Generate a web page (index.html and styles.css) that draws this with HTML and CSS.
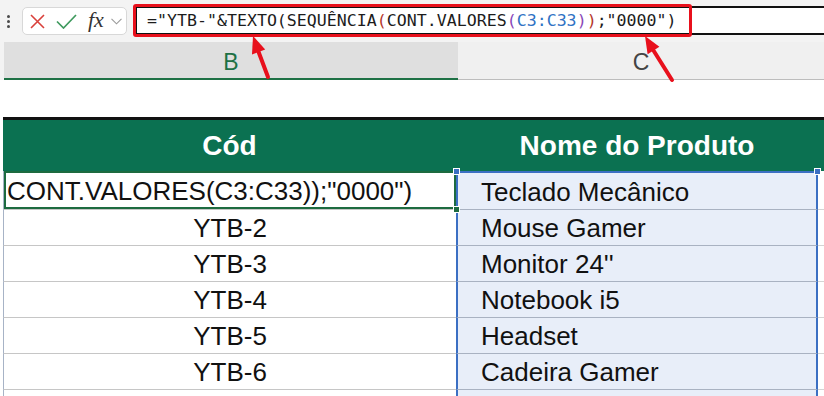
FILE: index.html
```html
<!DOCTYPE html>
<html lang="pt">
<head>
    <meta charset="UTF-8">
    <title>Planilha - Códigos</title>
    <link rel="stylesheet" href="styles.css">
</head>
<body>
    <div class="toolbar">
        <div class="grip"><i></i><i></i><i></i></div>
        <div class="fx-box">
            <svg class="ico-x" width="15" height="15" viewBox="0 0 15 15"><path d="M1 1L14 14M14 1L1 14" stroke="#d9403b" stroke-width="1.6" fill="none"/></svg>
            <svg class="ico-ok" width="21" height="15" viewBox="0 0 21 15"><path d="M1 7.5L7.5 14L20 1" stroke="#3f9a5e" stroke-width="1.7" fill="none"/></svg>
            <span class="fx">fx</span>
            <svg class="ico-down" width="11" height="7" viewBox="0 0 11 7"><path d="M0.5 0.8L5.5 5.8L10.5 0.8" stroke="#9a9a9a" stroke-width="1.1" fill="none"/></svg>
        </div>
        <div class="formula">="YTB-"&amp;TEXTO(SEQUÊNCIA<span class="p1">(</span>CONT.VALORES<span class="p2">(</span><span class="ref">C3:C33</span><span class="p2">)</span><span class="p1">)</span>;"0000")</div>
    </div>

    <div class="colheads">
        <div class="colhead sel">B</div>
        <div class="colhead">C</div>
    </div>

    <div class="gap"></div>

    <div class="sheet">
        <div class="row head">
            <div class="cell">Cód</div>
            <div class="cell">Nome do Produto</div>
            <div class="cell"></div>
        </div>
        <div class="row first">
            <div class="cell b active">CONT.VALORES(C3:C33));"0000")<span class="handle green"></span></div>
            <div class="cell c">Teclado Mecânico<span class="handle blue tl"></span><span class="handle blue tr"></span></div>
            <div class="cell d"></div>
        </div>
        <div class="row">
            <div class="cell b">YTB-2</div>
            <div class="cell c">Mouse Gamer</div>
            <div class="cell d"></div>
        </div>
        <div class="row">
            <div class="cell b">YTB-3</div>
            <div class="cell c">Monitor 24''</div>
            <div class="cell d"></div>
        </div>
        <div class="row">
            <div class="cell b">YTB-4</div>
            <div class="cell c">Notebook i5</div>
            <div class="cell d"></div>
        </div>
        <div class="row">
            <div class="cell b">YTB-5</div>
            <div class="cell c">Headset</div>
            <div class="cell d"></div>
        </div>
        <div class="row">
            <div class="cell b">YTB-6</div>
            <div class="cell c">Cadeira Gamer</div>
            <div class="cell d"></div>
        </div>
        <div class="row tail">
            <div class="cell b"></div>
            <div class="cell c"></div>
            <div class="cell d"></div>
        </div>
    </div>

    <!-- destaque em vermelho sobre a barra de fórmulas -->
    <div class="highlight"></div>
    <svg class="arrows" width="824" height="396" viewBox="0 0 824 396">
        <line x1="268" y1="77" x2="258.6" y2="52" stroke="#e8101c" stroke-width="4" stroke-linecap="round"/>
        <polygon points="253,36 265.2,49.5 252,54.5" fill="#e8101c"/>
        <line x1="672" y1="80" x2="653.5" y2="50.5" stroke="#e8101c" stroke-width="4" stroke-linecap="round"/>
        <polygon points="645,36 659.4,46.8 647.6,54.2" fill="#e8101c"/>
    </svg>
</body>
</html>
```

FILE: styles.css
```css
* { box-sizing: border-box; }
body {
    margin: 0;
    width: 824px;
    height: 396px;
    overflow: hidden;
    position: relative;
    background: #fff;
    font-family: "Liberation Sans", Arial, sans-serif;
}

/* barra de fórmulas */
.toolbar {
    height: 42px;
    background: #f3f3f3;
    display: flex;
    align-items: flex-start;
    padding-top: 6px;
}
.grip {
    width: 22px;
    padding: 9px 0 0 7px;
    display: flex;
    flex-direction: column;
    gap: 2px;
}
.grip i {
    display: block;
    width: 3px;
    height: 3px;
    border-radius: 50%;
    background: #4a4a4a;
}
.fx-box {
    width: 105px;
    height: 28px;
    margin-top: 1px;
    background: #fff;
    border: 1px solid #d8d8d8;
    border-radius: 5px;
    display: flex;
    align-items: center;
}
.ico-x { margin-left: 7px; }
.ico-ok { margin-left: 11px; }
.fx {
    margin-left: 11px;
    font-family: "Liberation Serif", serif;
    font-style: italic;
    font-size: 22px;
    color: #333;
    line-height: 1;
    margin-top: -3px;
}
.ico-down { margin-left: 7px; }
.formula {
    flex: 1;
    height: 29px;
    margin-left: 8px;
    background: #fff;
    border: 2px solid #111;
    border-right: none;
    padding-left: 10px;
    font-family: "DejaVu Sans Mono", monospace;
    font-size: 16.6px;
    line-height: 25px;
    color: #1c1c1c;
    white-space: nowrap;
}
.p1 { color: #b5372c; }
.p2 { color: #8a47b8; }
.ref { color: #2f72c4; }

.highlight {
    position: absolute;
    left: 133px;
    top: 4px;
    width: 559px;
    height: 33px;
    border: 3px solid #e8101c;
    border-radius: 3px;
}
.arrows {
    position: absolute;
    left: 0;
    top: 0;
}

/* cabeçalho das colunas */
.colheads {
    height: 38px;
    padding-left: 4px;
    display: grid;
    grid-template-columns: 454px 1fr;
    background: #f3f3f3;
}
.colhead {
    background: #f0f0f0;
    border-bottom: 1px solid #bdbdbd;
    color: #444;
    font-size: 23px;
    display: flex;
    align-items: center;
    justify-content: center;
    padding-top: 4px;
}
.colhead.sel {
    background: #dfdfdf;
    border-bottom: 2px solid #1e7145;
    color: #1e7145;
}
.gap { height: 37px; }

/* tabela */
.sheet { padding-left: 3px; }
.row {
    display: grid;
    grid-template-columns: 453px 362px 1fr;
    height: 36px;
}
.row.first { height: 39px; }
.row.tail { height: 6px; }
.row.head {
    height: 54px;
    border-top: 3px solid #111;
    background: #0b7151;
}
.cell {
    display: flex;
    align-items: center;
    justify-content: center;
    padding-top: 2px;
    font-size: 26px;
    color: #111;
    white-space: nowrap;
    position: relative;
}
.head .cell {
    color: #fff;
    font-weight: bold;
    font-size: 28px;
    padding-top: 0;
}
.cell.b {
    border-left: 1px solid #a7b3c6;
    border-bottom: 1px solid #c6c6c6;
}
.cell.c {
    justify-content: flex-start;
    padding-left: 23px;
    background: #e8eef9;
    border-left: 2px solid #3b6fc3;
    border-right: 2px solid #3b6fc3;
    border-bottom: 1px solid #a9b2c2;
}
.first .cell.c { border-top: 2px solid #3b6fc3; }
.cell.d { border-bottom: 1px solid #d4d4d4; }
.tail .cell { border-bottom: none; }
.cell.active {
    justify-content: flex-start;
    padding-left: 3px;
    box-shadow: inset 0 0 0 2px #1d6b40;
}

.handle {
    position: absolute;
    width: 7px;
    height: 7px;
    border: 1px solid #fff;
    z-index: 2;
}
.handle.green { background: #1d6b40; right: -4px; bottom: -4px; }
.handle.blue { background: #3b6fc3; top: -5px; }
.handle.tl { left: -5px; }
.handle.tr { right: -5px; }
```
